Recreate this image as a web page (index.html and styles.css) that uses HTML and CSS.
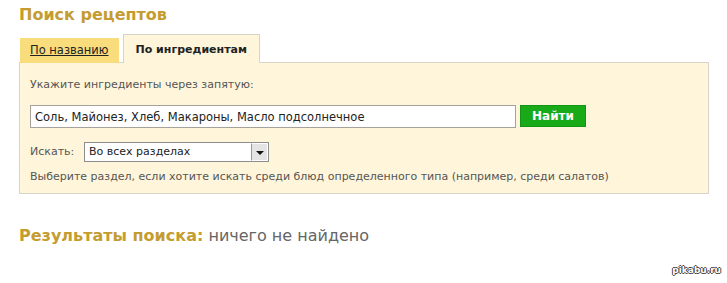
FILE: index.html
```html
<!DOCTYPE html>
<html>
<head>
    <meta charset="utf-8">
    <title>Поиск рецептов</title>
    <link rel="stylesheet" href="styles.css">
</head>
<body>
    <div class="page">
        <h1 class="title">Поиск рецептов</h1>
        <div class="tabs">
            <a class="tab tab-off" href="#">По названию</a>
            <span class="tab tab-on">По ингредиентам</span>
        </div>
        <div class="search-box">
            <div class="label">Укажите ингредиенты через запятую:</div>
            <div class="query-row">
                <input class="query" type="text" value="Соль, Майонез, Хлеб, Макароны, Масло подсолнечное">
                <button class="find">Найти</button>
            </div>
            <div class="where-row">
                <span class="where-label">Искать:</span>
                <div class="select">
                    <span class="select-text">Во всех разделах</span>
                    <span class="select-arrow"></span>
                </div>
            </div>
            <div class="hint">Выберите раздел, если хотите искать среди блюд определенного типа (например, среди салатов)</div>
        </div>
        <h2 class="results"><b>Результаты поиска:</b> ничего не найдено</h2>
    </div>
    <div class="watermark">pikabu.ru</div>
</body>
</html>
```

FILE: styles.css
```css
body {
    margin: 0;
    background: #fff;
    font-family: "DejaVu Sans", Verdana, sans-serif;
    color: #555;
}
.page {
    padding: 4px 19px 0 19px;
    width: 690px;
}
.title {
    margin: 0;
    font-size: 16px;
    font-weight: bold;
    color: #c59c30;
    height: 30px;
    line-height: 22px;
}
.tabs {
    display: flex;
    align-items: flex-end;
    gap: 4px;
    padding-left: 1px;
    position: relative;
    z-index: 1;
    margin-bottom: -1px;
}
.tab {
    color: #222;
}
.tab-off {
    background: #f9dc7c;
    height: 25px;
    line-height: 25px;
    padding: 0 10px;
    font-size: 11.5px;
    text-decoration: underline;
}
.tab-on {
    background: #fff5da;
    border: 1px solid #d9d4c8;
    border-bottom: none;
    height: 28px;
    line-height: 29px;
    padding: 0 12px;
    font-size: 11px;
    font-weight: bold;
}
.search-box {
    background: #fff5da;
    border: 1px solid #d9d4c8;
    padding: 15px 10px 8px 10px;
    height: 107px;
}
.label {
    font-size: 11px;
    height: 27px;
}
.query-row {
    display: flex;
    gap: 4px;
    height: 34px;
}
.query {
    width: 476px;
    height: 21px;
    margin: 0;
    padding: 0 4px;
    border: 1px solid #a5a29b;
    font-family: inherit;
    font-size: 11.5px;
    color: #222;
    background: #fff;
    box-sizing: content-box;
}
.find {
    width: 66px;
    height: 22px;
    margin: 0;
    border: 1px solid #129512;
    background: #19aa19;
    color: #fff;
    font-family: inherit;
    font-weight: bold;
    font-size: 12px;
}
.where-row {
    display: flex;
    align-items: center;
    height: 25px;
    font-size: 11px;
}
.where-label {
    width: 54px;
}
.select {
    display: flex;
    width: 183px;
    height: 18px;
    border: 1px solid #8d8d8d;
    background: #fff;
    color: #222;
}
.select-text {
    flex: 1;
    padding-left: 4px;
    line-height: 18px;
    font-size: 11px;
}
.select-arrow {
    width: 15px;
    background: #e4e4e4;
    border: 1px solid #fff;
    border-left: 1px solid #999;
    position: relative;
}
.select-arrow::after {
    content: "";
    position: absolute;
    left: 4px;
    top: 7px;
    border-left: 4px solid transparent;
    border-right: 4px solid transparent;
    border-top: 4px solid #111;
}
.hint {
    margin-top: 6px;
    font-size: 11px;
}
.results {
    margin: 0;
    padding-top: 32px;
    font-size: 16px;
    font-weight: normal;
    color: #666;
}
.results b {
    color: #c59c30;
}
.watermark {
    position: absolute;
    right: 6px;
    bottom: 8px;
    font-family: "DejaVu Sans", sans-serif;
    font-size: 9px;
    font-weight: bold;
    color: #fff;
    text-shadow: 1px 0 #444, -1px 0 #444, 0 1px #444, 0 -1px #444;
}
```
